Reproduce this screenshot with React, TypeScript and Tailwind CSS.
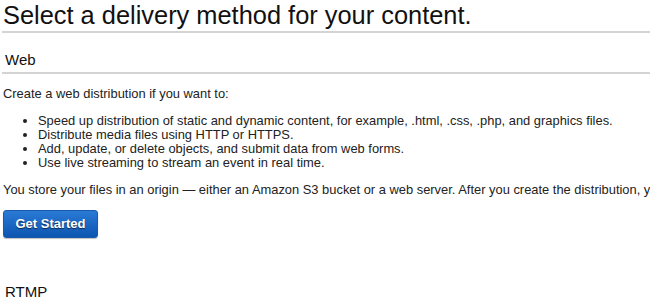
const bullets = [
  "Speed up distribution of static and dynamic content, for example, .html, .css, .php, and graphics files.",
  "Distribute media files using HTTP or HTTPS.",
  "Add, update, or delete objects, and submit data from web forms.",
  "Use live streaming to stream an event in real time.",
];

const App = () => {
  return (
    <div className="w-[650px] h-[299px] overflow-hidden bg-white text-[#222] font-['Liberation_Sans',Arial,sans-serif]">
      <h1 className="pl-[3px] pt-[1px] text-[25.4px] leading-[29px] text-[#111] whitespace-nowrap">
        Select a delivery method for your content.
      </h1>
      <div className="ml-[2px] h-[2px] bg-[#d4d4d4] mt-[1px]" />
      <div className="mt-[18px] pl-[5px] text-[15px] leading-[17px] text-[#111]">Web</div>
      <div className="ml-[2px] mt-[4px] h-[2px] bg-[#d4d4d4]" />
      <p className="mt-[13px] pl-[3px] text-[12.9px] leading-[14px] whitespace-nowrap">
        Create a web distribution if you want to:
      </p>
      <ul className="mt-[13px] pl-[38px] list-disc text-[12.9px] leading-[14px] whitespace-nowrap">
        {bullets.map((b) => (
          <li key={b}>{b}</li>
        ))}
      </ul>
      <p className="mt-[13px] pl-[3px] text-[12.9px] leading-[14px] whitespace-nowrap">
        You store your files in an origin — either an Amazon S3 bucket or a web server. After you create the distribution, you can add more origins.
      </p>
      <button className="ml-[3px] mt-[13px] w-[95px] h-[28px] rounded-[3px] border border-[#1a5aa8] bg-gradient-to-b from-[#2a7ad6] to-[#0c55b0] text-white font-bold text-[13px] [text-shadow:0_1px_1px_rgba(0,0,0,0.6)] shadow-[0_1px_1px_rgba(0,0,0,0.25)]">
        Get Started
      </button>
      <div className="mt-[45px] pl-[5px] text-[15px] leading-[17px] text-[#111]">RTMP</div>
    </div>
  );
};

export default App;
